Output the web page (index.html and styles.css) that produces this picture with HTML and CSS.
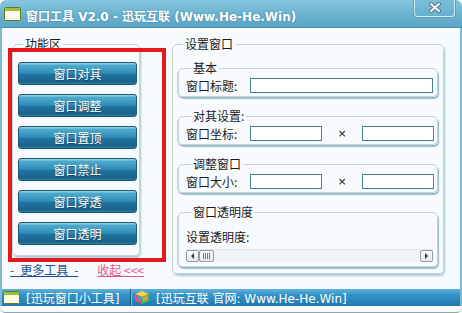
FILE: index.html
```html
<!DOCTYPE html>
<html lang="zh-CN">
<head>
  <meta charset="UTF-8">
  <title>窗口工具 V2.0</title>
  <link rel="stylesheet" href="styles.css">
</head>
<body>
  <div class="window">
    <div class="titlebar">
      <svg class="app-icon" width="17" height="14" viewBox="0 0 17 14">
        <rect x="0.5" y="0.5" width="16" height="13" rx="1" fill="#fbfbe8" stroke="#5f7a23"/>
        <rect x="1" y="1" width="15" height="3" fill="#9cbf3c"/>
      </svg>
      <span class="title">窗口工具 V2.0 - 迅玩互联 (Www.He-He.Win)</span>
      <div class="close">
        <svg width="14" height="11" viewBox="0 0 14 11">
          <path d="M3 2 L11 9 M11 2 L3 9" stroke="#55717e" stroke-width="4" stroke-linecap="round"/>
          <path d="M3 2 L11 9 M11 2 L3 9" stroke="#f4f6f7" stroke-width="2.2" stroke-linecap="round"/>
        </svg>
      </div>
    </div>

    <div class="main">
      <div class="left">
        <fieldset class="group func">
          <legend>功能区</legend>
          <button class="btn">窗口对其</button>
          <button class="btn">窗口调整</button>
          <button class="btn">窗口置顶</button>
          <button class="btn">窗口禁止</button>
          <button class="btn">窗口穿透</button>
          <button class="btn">窗口透明</button>
        </fieldset>
        <div class="highlight"></div>
        <div class="links">
          <a class="more" href="#">-&ensp;更多工具&ensp;-</a>
          <a class="fold" href="#">收起 &lt;&lt;&lt;</a>
        </div>
      </div>

      <fieldset class="group settings">
        <legend>设置窗口</legend>

        <fieldset class="sub">
          <legend>基本</legend>
          <div class="row">
            <span class="label">窗口标题:</span>
            <input class="field wide" type="text">
          </div>
        </fieldset>

        <fieldset class="sub">
          <legend>对其设置:</legend>
          <div class="row">
            <span class="label">窗口坐标:</span>
            <input class="field half" type="text">
            <span class="times">×</span>
            <input class="field half" type="text">
          </div>
        </fieldset>

        <fieldset class="sub">
          <legend>调整窗口</legend>
          <div class="row">
            <span class="label">窗口大小:</span>
            <input class="field half" type="text">
            <span class="times">×</span>
            <input class="field half" type="text">
          </div>
        </fieldset>

        <fieldset class="sub alpha">
          <legend>窗口透明度</legend>
          <div class="caption">设置透明度:</div>
          <div class="scrollbar">
            <div class="sb-btn"><span class="arrow-left"></span></div>
            <div class="sb-thumb"><span></span><span></span><span></span><span></span></div>
            <div class="sb-track"></div>
            <div class="sb-btn"><span class="arrow-right"></span></div>
          </div>
        </fieldset>
      </fieldset>
    </div>

    <div class="statusbar">
      <div class="panel first">
        <svg class="app-icon" width="17" height="13" viewBox="0 0 17 13">
          <rect x="0.5" y="0.5" width="16" height="12" rx="1" fill="#fbfbe8" stroke="#5f7a23"/>
          <rect x="1" y="1" width="15" height="3" fill="#9cbf3c"/>
        </svg>
        <span>[迅玩窗口小工具]</span>
      </div>
      <div class="panel">
        <svg class="cube" width="16" height="15" viewBox="0 0 16 15">
          <polygon points="8,1 15,4 8,7 1,4" fill="#f6d43a"/>
          <polygon points="1,4 8,7 8,14 1,11" fill="#e8506e"/>
          <polygon points="8,7 15,4 15,11 8,14" fill="#4cb86a"/>
          <polygon points="4,6 7,7.5 7,11 4,9.5" fill="#5b8fe0"/>
          <polygon points="9,7.5 13,6 13,9.5 9,11" fill="#f0a030"/>
        </svg>
        <span>[迅玩互联 官网: Www.He-He.Win]</span>
      </div>
    </div>
  </div>
</body>
</html>
```

FILE: styles.css
```css
body {
  margin: 0;
  background: #ffffff;
  font-family: "DejaVu Sans", "Noto Sans CJK SC", sans-serif;
  font-size: 12px;
  color: #1c1c1c;
}
.window {
  width: 462px;
  height: 313px;
  box-sizing: border-box;
  display: flex;
  flex-direction: column;
  background: #f7fafc;
  border-radius: 6px 6px 5px 5px;
  border-bottom: 1px solid #9aa5aa;
  overflow: hidden;
}

/* title bar */
.titlebar {
  height: 28px;
  flex: none;
  display: flex;
  align-items: center;
  padding-left: 4px;
  background: linear-gradient(#86c7df, #6eb6d2 45%, #5aa5c5 100%);
  border-bottom: 1px solid #4e93b1;
  box-sizing: border-box;
}
.title {
  margin-left: 5px;
  margin-top: 4px;
  color: #ffffff;
  font-weight: bold;
  font-size: 12px;
  text-shadow: 0 0 2px rgba(30, 80, 110, 0.5);
}
.close {
  align-self: flex-start;
  margin-left: auto;
  margin-right: 7px;
  margin-top: -1px;
  width: 41px;
  height: 18px;
  box-sizing: border-box;
  display: flex;
  align-items: center;
  justify-content: center;
  border: 1px solid #cfe9f3;
  border-top: none;
  border-radius: 0 0 4px 4px;
  background: linear-gradient(#7cc0da, #66b0ce);
  box-shadow: 0 0 0 1px #5b9fbd;
}

/* main area */
.main {
  flex: 1;
  display: flex;
  align-items: flex-start;
  gap: 32px;
  padding: 8px 0 0 10px;
  border-left: 2px solid #7fb8cf;
  border-right: 2px solid #7fb8cf;
  font-family: "Noto Sans CJK SC", sans-serif;
}
.group, .sub {
  margin: 0;
  border: 1px solid #c5d1d7;
  border-radius: 5px;
  background: #f8fbfd;
  box-shadow: 1px 2px 2px #a9cbd8;
}
legend {
  margin-left: 5px;
  padding: 0 2px;
  line-height: 16px;
  font-size: 12px;
  color: #1c1c1c;
}

/* left column */
.left {
  position: relative;
  width: 128px;
  flex: none;
}
.func {
  width: 128px;
  box-sizing: border-box;
  padding: 10px 2px 10px 5px;
  display: flex;
  flex-direction: column;
  gap: 9px;
}
.btn {
  width: 119px;
  height: 23px;
  padding: 0;
  border: 1px solid #1b5b79;
  border-radius: 3px;
  background: linear-gradient(#9ad6ec 0%, #4ea9cd 12%, #2f8db5 48%, #1f739c 55%, #19658b 88%, #2a7ba0 100%);
  color: #ffffff;
  font-family: "Noto Sans CJK SC", sans-serif;
  font-size: 12px;
  text-shadow: 0 1px 1px rgba(10, 50, 70, 0.6);
  cursor: pointer;
}
.highlight {
  position: absolute;
  left: -4px;
  top: 12px;
  width: 158px;
  height: 214px;
  box-sizing: border-box;
  border: 4px solid #e3191c;
  pointer-events: none;
}
.links {
  margin: 6px 0 0 -2px;
  width: 160px;
  display: flex;
  gap: 19px;
  line-height: 16px;
  white-space: nowrap;
}
.links a {
  font-size: 12px;
}
.more {
  color: #1c4f9a;
}
.fold {
  color: #e4568f;
}

/* right column */
.settings {
  width: 272px;
  box-sizing: border-box;
  padding: 8px 5px 6px 5px;
  display: flex;
  flex-direction: column;
  gap: 11px;
}
.sub {
  padding: 2px 3px 3px 7px;
  box-shadow: 1px 2px 1px #96bccb, -1px 1px 1px #c8dde6;
}
.row {
  display: flex;
  align-items: center;
  height: 15px;
}
.label {
  width: 64px;
  line-height: 15px;
}
.field {
  height: 15px;
  box-sizing: border-box;
  margin: 0;
  padding: 0 2px;
  border: 1px solid #4d7f92;
  background: #ffffff;
}
.wide {
  width: 183px;
}
.half {
  width: 72px;
}
.times {
  width: 40px;
  text-align: center;
  font-family: "DejaVu Sans", sans-serif;
  font-size: 11px;
}
.alpha {
  padding-bottom: 4px;
}
.caption {
  margin-top: 8px;
  line-height: 14px;
}
.scrollbar {
  margin-top: 5px;
  width: 247px;
  height: 12px;
  display: flex;
  background: #f1f3f4;
  border-top: 1px solid #e1e5e7;
}
.sb-btn, .sb-thumb {
  width: 13px;
  height: 12px;
  box-sizing: border-box;
  border: 1px solid #8f9fa8;
  border-radius: 2px;
  background: linear-gradient(#fbfbfb, #e4e7e9);
  display: flex;
  align-items: center;
  justify-content: center;
}
.sb-thumb {
  width: 15px;
  gap: 1px;
}
.sb-thumb span {
  width: 1px;
  height: 6px;
  background: #6d7b83;
}
.sb-track {
  flex: 1;
}
.arrow-left, .arrow-right {
  width: 0;
  height: 0;
  border-top: 3px solid transparent;
  border-bottom: 3px solid transparent;
}
.arrow-left {
  border-right: 3px solid #333;
}
.arrow-right {
  border-left: 3px solid #333;
}

/* status bar */
.statusbar {
  height: 17px;
  flex: none;
  display: flex;
  margin-bottom: 6px;
  background: linear-gradient(#5db2dc 0%, #3592c6 35%, #1f78b0 100%);
  border-left: 2px solid #7fb8cf;
  border-right: 2px solid #7fb8cf;
  font-family: "DejaVu Sans", "Noto Sans CJK SC", sans-serif;
  color: #ffffff;
  font-size: 12px;
}
.panel {
  display: flex;
  align-items: center;
  gap: 6px;
  padding-left: 2px;
}
.panel.first {
  width: 127px;
  padding-left: 1px;
  border-right: 1px solid #1a5a82;
  box-shadow: 1px 0 0 #6fbde0;
}
.panel .cube {
  margin-left: 1px;
}
```
